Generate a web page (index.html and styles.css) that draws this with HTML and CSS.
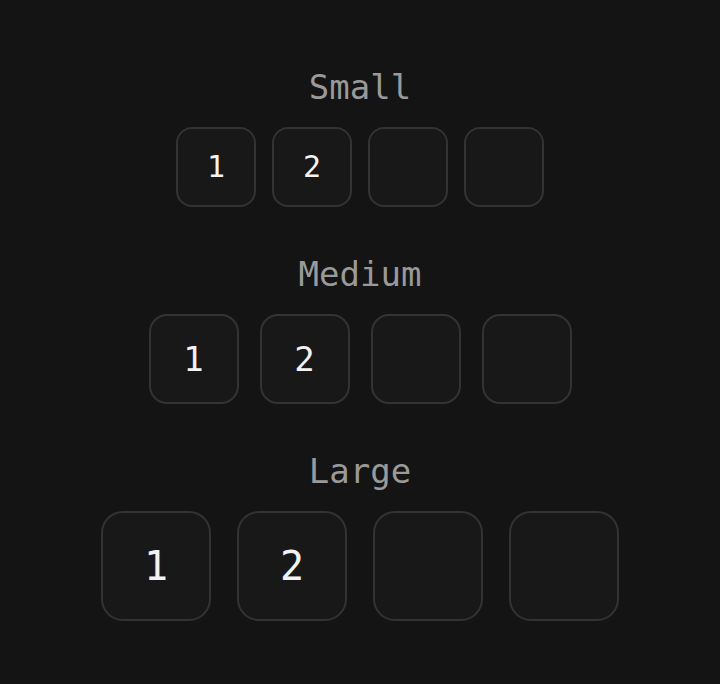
FILE: index.html
```html
<!DOCTYPE html>
<html lang="en">
<head>
    <meta charset="UTF-8">
    <meta name="viewport" content="width=device-width, initial-scale=1.0">
    <title>PIN Input Sizes</title>
    <link rel="stylesheet" href="styles.css">
</head>
<body>

<div class="container">
    <!-- Small -->
    <div class="group">
        <h2 class="label">Small</h2>
        <div class="pin pin-sm">
            <input type="text" maxlength="1" value="1">
            <input type="text" maxlength="1" value="2">
            <input type="text" maxlength="1">
            <input type="text" maxlength="1">
        </div>
    </div>

    <!-- Medium -->
    <div class="group">
        <h2 class="label">Medium</h2>
        <div class="pin pin-md">
            <input type="text" maxlength="1" value="1">
            <input type="text" maxlength="1" value="2">
            <input type="text" maxlength="1">
            <input type="text" maxlength="1">
        </div>
    </div>

    <!-- Large -->
    <div class="group">
        <h2 class="label">Large</h2>
        <div class="pin pin-lg">
            <input type="text" maxlength="1" value="1">
            <input type="text" maxlength="1" value="2">
            <input type="text" maxlength="1">
            <input type="text" maxlength="1">
        </div>
    </div>
</div>

</body>
</html>
```

FILE: styles.css
```css
* {
    margin: 0;
    padding: 0;
    box-sizing: border-box;
    font-family: "DejaVu Sans Mono", monospace;
}
body {
    display: flex;
    justify-content: center;
    align-items: center;
    height: 100vh;
    padding-top: 3px;
    background: #141414;
}
.container {
    display: flex;
    flex-direction: column;
    align-items: center;
    gap: 47px;
}
.group {
    display: flex;
    flex-direction: column;
    align-items: center;
    gap: 20px;
}
.label {
    font-size: 34px;
    font-weight: normal;
    line-height: 40px;
    color: #9a9a9a;
}
.pin {
    display: flex;
}
.pin input {
    background: #181818;
    border: 2px solid #333;
    color: #f2f2f2;
    text-align: center;
    outline: none;
}
.pin-sm {
    gap: 16px;
}
.pin-sm input {
    width: 80px;
    height: 80px;
    border-radius: 16px;
    font-size: 30px;
}
.pin-md {
    gap: 21px;
}
.pin-md input {
    width: 90px;
    height: 90px;
    border-radius: 18px;
    font-size: 34px;
}
.pin-lg {
    gap: 26px;
}
.pin-lg input {
    width: 110px;
    height: 110px;
    border-radius: 22px;
    font-size: 40px;
}
```
